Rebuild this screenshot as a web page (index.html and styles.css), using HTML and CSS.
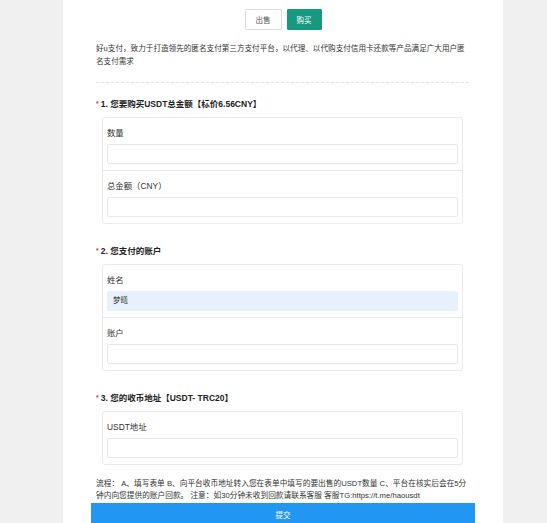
FILE: index.html
```html
<!DOCTYPE html>
<html lang="zh-CN">
<head>
<meta charset="utf-8">
<title>好u支付</title>
<link rel="stylesheet" href="styles.css">
</head>
<body>
<div class="page">
  <div class="tabs">
    <button class="tab">出售</button>
    <button class="tab tab-active">购买</button>
  </div>
  <p class="intro">好u支付，致力于打造领先的匿名支付第三方支付平台，以代理、以代购支付信用卡还款等产品满足广大用户匿名支付需求</p>
  <div class="divider"></div>

  <div class="question">
    <div class="q-title"><span class="req">*</span>1. 您要购买USDT总金额【标价6.56CNY】</div>
    <div class="group">
      <div class="row">
        <div class="label">数量</div>
        <div class="input"></div>
      </div>
      <div class="row">
        <div class="label">总金额（CNY）</div>
        <div class="input"></div>
      </div>
    </div>
  </div>

  <div class="question">
    <div class="q-title"><span class="req">*</span>2. 您支付的账户</div>
    <div class="group">
      <div class="row">
        <div class="label">姓名</div>
        <div class="input input-filled">梦曦</div>
      </div>
      <div class="row">
        <div class="label">账户</div>
        <div class="input"></div>
      </div>
    </div>
  </div>

  <div class="question">
    <div class="q-title"><span class="req">*</span>3. 您的收币地址【USDT- TRC20】</div>
    <div class="group">
      <div class="row">
        <div class="label">USDT地址</div>
        <div class="input"></div>
      </div>
    </div>
  </div>

  <p class="note">流程： A、填写表单 B、向平台收币地址转入您在表单中填写的要出售的USDT数量 C、平台在核实后会在5分钟内向您提供的账户回款。 注意：如30分钟未收到回款请联系客服 客服TG:https://t.me/haousdt</p>
  <button class="submit">提交</button>
</div>
</body>
</html>
```

FILE: styles.css
```css
html, body {
  margin: 0;
  padding: 0;
  background: #f0f0f0;
}
body {
  font-family: "Liberation Sans", "Noto Sans CJK SC", sans-serif;
  color: #333;
  height: 523px;
  overflow: hidden;
}
.page {
  margin-left: 63px;
  width: 440px;
  box-sizing: border-box;
  padding: 9px 33px 0 33px;
  background: #fff;
  min-height: 523px;
}
.tabs {
  display: flex;
  justify-content: center;
  gap: 5px;
}
.tab {
  height: 21px;
  width: 37px;
  padding: 0;
  border: 1px solid #dcdcdc;
  background: #fff;
  color: #555;
  font-family: inherit;
  font-size: 7.5px;
  border-radius: 1px;
}
.tab-active {
  width: 35px;
  background: #16997f;
  border-color: #16997f;
  color: #fff;
}
.intro {
  margin: 12px 0 0;
  font-size: 7.6px;
  line-height: 13px;
  color: #333;
}
.divider {
  margin-top: 14px;
  margin-right: 1px;
  border-top: 1px dashed #e2e2e2;
}
.question {
  margin-top: 15px;
}
.question + .question {
  margin-top: 21px;
}
.q-title {
  font-size: 8.5px;
  line-height: 13px;
  font-weight: bold;
  color: #222;
}
.req {
  color: #e4393c;
  font-size: 7px;
  margin-right: 2px;
  position: relative;
  top: -1px;
}
.group {
  margin: 6px 7px 0 6px;
  border: 1px solid #ebebeb;
  border-radius: 3px;
}
.row {
  padding: 9px 4px 6px;
}
.row + .row {
  border-top: 1px solid #ebebeb;
}
.label {
  font-size: 8.4px;
  line-height: 12px;
  color: #333;
  margin-bottom: 5px;
}
.input {
  box-sizing: border-box;
  height: 20px;
  border: 1px solid #e8e8e8;
  border-radius: 2px;
  background: #fff;
  font-size: 7.5px;
  line-height: 18px;
  padding-left: 5px;
  color: #333;
}
.input-filled {
  background: #e8f0fe;
  border-color: #e8f0fe;
}
.note {
  margin: 13px 0 0;
  font-size: 7.7px;
  line-height: 12px;
  color: #333;
}
.submit {
  display: block;
  margin: 1px -5px 0 -5px;
  width: calc(100% + 10px);
  height: 22px;
  border: none;
  background: #2196f3;
  color: #fff;
  font-family: inherit;
  font-size: 7.5px;
  padding: 0;
}
```
